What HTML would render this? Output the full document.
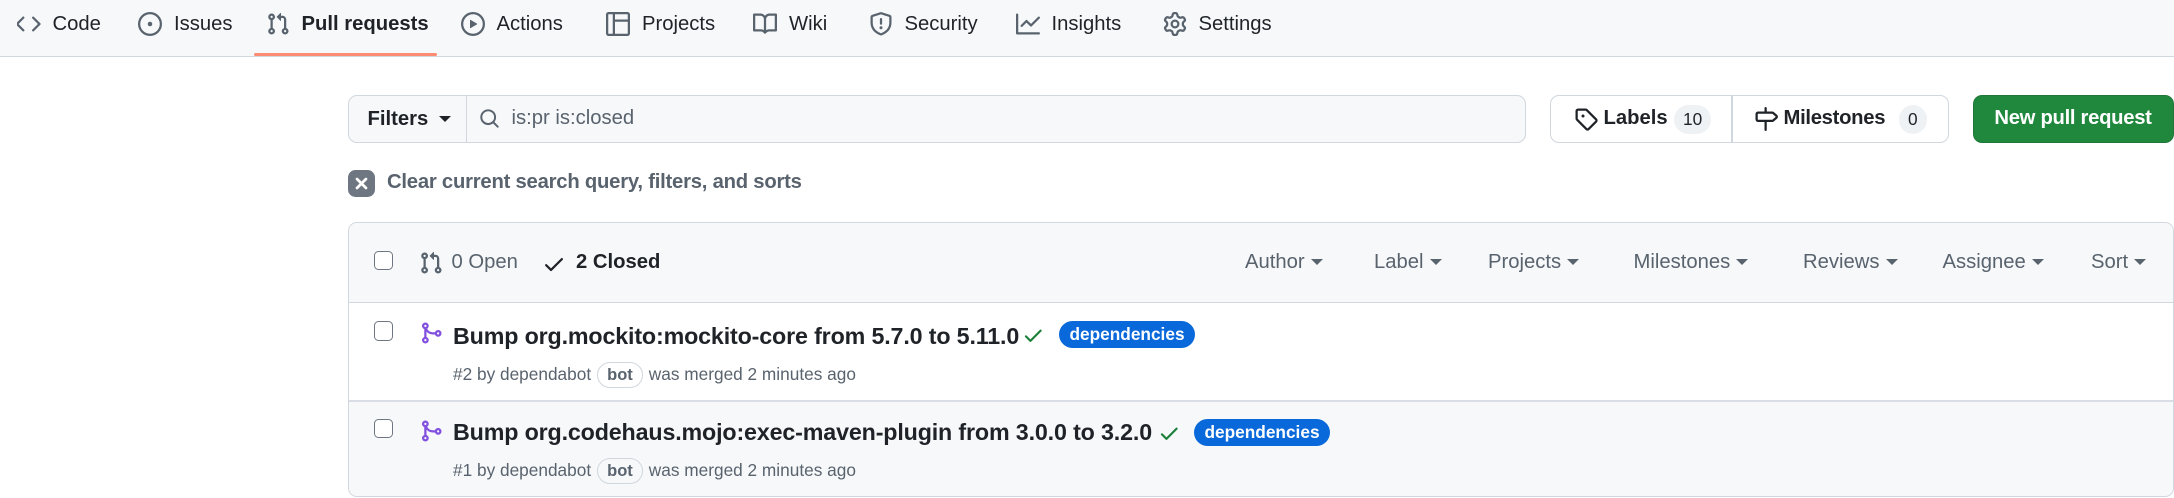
<!DOCTYPE html>
<html><head><meta charset="utf-8">
<style>
*{box-sizing:border-box;margin:0;padding:0}
html,body{width:2174px;height:498px;overflow:hidden;background:#fff}
#w{zoom:1.5;position:relative;width:1449.4px;height:332px;font-family:"Liberation Sans",sans-serif;color:#1f2328}
.a{position:absolute;white-space:nowrap}
.nav{position:absolute;left:0;top:0;width:1449.4px;height:38px;background:#f6f8fa;border-bottom:1px solid #d0d7de}
.ni{position:absolute;top:8px;font-size:13.5px;color:#1f2328;display:flex;align-items:center;gap:8px;height:16px}
.ni svg{width:16px;height:16px;fill:#59636e;flex:none}
.ul{position:absolute;left:169px;top:35px;width:122px;height:2px;background:#fd8c73;border-radius:2px}
svg{fill:currentColor}
.caret{display:inline-block;width:0;height:0;border-left:4px solid transparent;border-right:4px solid transparent;border-top:4px solid currentColor;vertical-align:middle;margin-left:4px}
.cb{position:absolute;width:13px;height:13px;border:1px solid #6e7781;border-radius:3px;background:#fff}
.lbl{position:absolute;height:18px;background:#0969da;color:#fff;font-size:11.5px;font-weight:bold;border-radius:9px;padding:0 7px;line-height:18px}
.bot{display:inline-block;border:1px solid #d0d7de;border-radius:9px;padding:0 6px;font-weight:bold;font-size:11px;line-height:16px;color:#59636e;margin:0 4px}
.sf{position:absolute;top:167px;font-size:13.5px;color:#59636e}
.t{position:absolute;font-size:15.5px;font-weight:bold;letter-spacing:-.1px;white-space:nowrap}
.m{position:absolute;font-size:11.5px;color:#59636e;letter-spacing:0;white-space:nowrap}
</style></head><body><div id="w">
<div class="nav">
 <div class="ni" style="left:11px"><svg viewBox="0 0 16 16"><path d="m11.28 3.22 4.25 4.25a.75.75 0 0 1 0 1.06l-4.25 4.25a.75.75 0 0 1-1.06-1.06L13.94 8l-3.72-3.72a.75.75 0 0 1 1.06-1.06Zm-6.56 0a.75.75 0 0 1 0 1.06L1.06 8l3.72 3.72a.75.75 0 0 1-1.06 1.06L-.53 8.53a.75.75 0 0 1 0-1.06l4.25-4.25a.75.75 0 0 1 1.060 0Z"/></svg>Code</div>
 <div class="ni" style="left:92px"><svg viewBox="0 0 16 16"><path d="M8 9.5a1.5 1.5 0 1 0 0-3 1.5 1.5 0 0 0 0 3Z"/><path d="M8 0a8 8 0 1 1 0 16A8 8 0 0 1 8 0ZM1.5 8a6.5 6.5 0 1 0 13 0 6.5 6.5 0 0 0-13 0Z"/></svg>Issues</div>
 <div class="ni" style="left:177px;font-weight:bold"><svg viewBox="0 0 16 16"><path d="M1.5 3.25a2.25 2.25 0 1 1 3 2.122v5.256a2.251 2.251 0 1 1-1.5 0V5.372A2.25 2.25 0 0 1 1.5 3.25Zm5.677-.177L9.573.677A.25.25 0 0 1 10 .854V2.5h1A2.5 2.5 0 0 1 13.5 5v5.628a2.251 2.251 0 1 1-1.5 0V5a1 1 0 0 0-1-1h-1v1.646a.25.25 0 0 1-.427.177L7.177 3.427a.25.25 0 0 1 0-.354ZM3.750 2.5a.75.75 0 1 0 0 1.5.75.75 0 0 0 0-1.5Zm0 9.5a.75.75 0 1 0 0 1.5.75.75 0 0 0 0-1.5Zm8.25.75a.75.75 0 1 0 1.5 0 .75.75 0 0 0-1.5 0Z"/></svg>Pull requests</div>
 <div class="ni" style="left:307px"><svg viewBox="0 0 16 16"><path d="M8 0a8 8 0 1 1 0 16A8 8 0 0 1 8 0ZM1.5 8a6.5 6.5 0 1 0 13 0 6.5 6.5 0 0 0-13 0Zm4.879-2.773 4.264 2.559a.25.25 0 0 1 0 .428l-4.264 2.559A.25.25 0 0 1 6 10.559V5.442a.25.25 0 0 1 .379-.215Z"/></svg>Actions</div>
 <div class="ni" style="left:404px"><svg viewBox="0 0 16 16"><path d="M1.75 0h12.5C15.216 0 16 .784 16 1.75v12.5A1.75 1.75 0 0 1 14.25 16H1.75A1.75 1.75 0 0 1 0 14.25V1.75C0 .784.784 0 1.75 0ZM1.5 1.75v12.5c0 .138.112.25.25.25H4.5V1.5H1.75a.25.25 0 0 0-.25.25ZM6 14.5h8.25a.25.25 0 0 0 .25-.25V6.5H6ZM14.5 5V1.75a.25.25 0 0 0-.25-.25H6V5Z"/></svg>Projects</div>
 <div class="ni" style="left:502px"><svg viewBox="0 0 16 16"><path d="M0 1.75A.75.75 0 0 1 .75 1h4.253c1.227 0 2.317.59 3 1.501A3.743 3.743 0 0 1 11.006 1h4.245a.75.75 0 0 1 .75.75v10.5a.75.75 0 0 1-.75.75h-4.507a2.25 2.25 0 0 0-1.591.659l-.622.621a.75.75 0 0 1-1.060 0l-.622-.621A2.25 2.25 0 0 0 5.258 13H.75a.75.75 0 0 1-.75-.75Zm7.251 10.324.004-5.073-.002-2.253A2.25 2.25 0 0 0 5.003 2.5H1.5v9h3.757a3.75 3.75 0 0 1 1.994.574ZM8.755 4.75l-.004 7.322a3.752 3.752 0 0 1 1.992-.572H14.5v-9h-3.495a2.25 2.25 0 0 0-2.25 2.25Z"/></svg>Wiki</div>
 <div class="ni" style="left:579px"><svg viewBox="0 0 16 16"><path d="M7.467.133a1.748 1.748 0 0 1 1.066 0l5.25 1.68A1.75 1.75 0 0 1 15 3.48V7c0 1.566-.32 3.182-1.303 4.682-.983 1.498-2.585 2.813-5.032 3.855a1.697 1.697 0 0 1-1.330 0c-2.447-1.042-4.049-2.357-5.032-3.855C1.32 10.182 1 8.566 1 7V3.48a1.755 1.755 0 0 1 1.217-1.667Zm.61 1.429a.25.25 0 0 0-.153 0l-5.25 1.68a.25.25 0 0 0-.174.238V7c0 1.358.275 2.666 1.057 3.86.784 1.194 2.121 2.34 4.366 3.297a.196.196 0 0 0 .154 0c2.245-.956 3.582-2.104 4.366-3.298C13.225 9.666 13.5 8.36 13.5 7V3.48a.251.251 0 0 0-.174-.237l-5.25-1.68ZM8.75 4.75v3a.75.75 0 0 1-1.5 0v-3a.75.75 0 0 1 1.5 0ZM9 10.5a1 1 0 1 1-2 0 1 1 0 0 1 2 0Z"/></svg>Security</div>
 <div class="ni" style="left:677px"><svg viewBox="0 0 16 16"><path d="M1.5 1.75V13.5h13.75a.75.75 0 0 1 0 1.5H.75a.75.75 0 0 1-.75-.75V1.75a.75.75 0 0 1 1.5 0Zm14.28 2.53-5.25 5.25a.75.75 0 0 1-1.060 0L7 7.06 4.28 9.78a.751.751 0 0 1-1.042-.018.751.751 0 0 1-.018-1.042l3.25-3.25a.75.75 0 0 1 1.060 0L10 7.94l4.72-4.720a.751.751 0 0 1 1.042.018.751.751 0 0 1 .018 1.042Z"/></svg>Insights</div>
 <div class="ni" style="left:775px"><svg viewBox="0 0 16 16"><path d="M8 0a8.2 8.2 0 0 1 .701.031C9.444.095 9.99.645 10.16 1.29l.288 1.107c.018.066.079.158.212.224.231.114.454.243.668.386.123.082.233.09.299.071l1.103-.303c.644-.176 1.392.021 1.82.63.27.385.506.792.704 1.218.315.675.111 1.422-.364 1.891l-.814.806c-.049.048-.098.147-.088.294.016.257.016.515 0 .772-.01.147.038.246.088.294l.814.806c.475.469.679 1.216.364 1.891a7.977 7.977 0 0 1-.704 1.217c-.428.61-1.176.807-1.82.63l-1.102-.302c-.067-.019-.177-.011-.3.071a5.909 5.909 0 0 1-.668.386c-.133.066-.194.158-.211.224l-.29 1.106c-.168.646-.715 1.196-1.458 1.26a8.006 8.006 0 0 1-1.402 0c-.743-.064-1.289-.614-1.458-1.26l-.289-1.106c-.018-.066-.079-.158-.212-.224a5.738 5.738 0 0 1-.668-.386c-.123-.082-.233-.09-.299-.071l-1.103.303c-.644.176-1.392-.021-1.82-.63a8.12 8.12 0 0 1-.704-1.218c-.315-.675-.111-1.422.363-1.891l.815-.806c.05-.048.098-.147.088-.294a6.214 6.214 0 0 1 0-.772c.01-.147-.038-.246-.088-.294l-.815-.806C.635 6.045.431 5.298.746 4.623a7.92 7.92 0 0 1 .704-1.217c.428-.61 1.176-.807 1.82-.63l1.102.302c.067.019.177.011.3-.071.214-.143.437-.272.668-.386.133-.066.194-.158.211-.224l.29-1.106C6.009.645 6.556.095 7.299.03 7.53.01 7.764 0 8 0Zm-.571 1.525c-.036.003-.108.036-.137.146l-.289 1.105c-.147.561-.549.967-.998 1.189-.173.086-.34.183-.5.29-.417.278-.97.423-1.529.27l-1.103-.303c-.109-.03-.175.016-.195.045-.22.312-.412.644-.573.99-.014.031-.021.11.059.19l.815.806c.411.406.562.957.53 1.456a4.709 4.709 0 0 0 0 .582c.032.499-.119 1.05-.53 1.456l-.815.806c-.081.08-.073.159-.059.19.162.346.353.677.573.989.02.03.085.076.195.046l1.102-.303c.56-.153 1.113-.008 1.53.27.161.107.328.204.501.29.447.222.85.629.997 1.189l.289 1.105c.029.109.101.143.137.146a6.6 6.6 0 0 0 1.142 0c.036-.003.108-.036.137-.146l.289-1.105c.147-.561.549-.967.998-1.189.173-.086.34-.183.5-.29.417-.278.97-.423 1.529-.27l1.103.303c.109.029.175-.016.195-.045.22-.313.411-.644.573-.99.014-.031.021-.11-.059-.19l-.815-.806c-.411-.406-.562-.957-.53-1.456a4.709 4.709 0 0 0 0-.582c-.032-.499.119-1.05.53-1.456l.815-.806c.081-.08.073-.159.059-.19a6.464 6.464 0 0 0-.573-.989c-.02-.03-.085-.076-.195-.046l-1.102.303c-.56.153-1.113.008-1.53-.27a4.44 4.440 0 0 0-.501-.29c-.447-.222-.85-.629-.997-1.189l-.289-1.105c-.029-.11-.101-.143-.137-.146a6.6 6.6 0 0 0-1.142 0ZM11 8a3 3 0 1 1-6 0 3 3 0 0 1 6 0ZM9.5 8a1.5 1.5 0 1 0-3.001.001A1.5 1.5 0 0 0 9.5 8Z"/></svg>Settings</div>
 <div class="ul"></div>
</div>

<div class="a" style="left:232px;top:63px;width:785px;height:32px;border:1px solid #d0d7de;border-radius:6px;background:#f6f8fa"></div>
<div class="a" style="left:232px;top:63px;width:79px;height:32px;border-right:1px solid #d0d7de;font-size:13.5px;font-weight:bold;line-height:32px;padding-left:13px">Filters<span class="caret" style="margin-left:7px"></span></div>
<svg class="a" style="left:319px;top:72px;width:14px;height:14px;color:#59636e" viewBox="0 0 16 16"><path d="M10.68 11.74a6 6 0 0 1-7.922-8.982 6 6 0 0 1 8.982 7.922l3.040 3.040a.749.749 0 0 1-.326 1.275.749.749 0 0 1-.734-.215ZM11.5 7a4.499 4.499 0 1 0-8.997 0A4.499 4.499 0 0 0 11.5 7Z"/></svg>
<div class="a" style="left:341px;top:71px;font-size:13.5px;color:#59636e">is:pr is:closed</div>

<div class="a" style="left:1033px;top:63px;width:266px;height:32px;border:1px solid #d0d7de;border-radius:6px;background:#fff"></div>
<div class="a" style="left:1154px;top:63px;width:1px;height:32px;background:#d0d7de"></div>
<svg class="a" style="left:1049px;top:71px;width:16px;height:16px;color:#1f2328" viewBox="0 0 16 16"><path d="M1 7.775V2.75C1 1.784 1.784 1 2.75 1h5.025c.464 0 .91.184 1.238.513l6.25 6.25a1.75 1.75 0 0 1 0 2.474l-5.026 5.026a1.75 1.75 0 0 1-2.474 0l-6.25-6.25A1.752 1.752 0 0 1 1 7.775Zm1.5 0c0 .066.026.13.073.177l6.25 6.25a.25.25 0 0 0 .354 0l5.025-5.025a.25.25 0 0 0 0-.354l-6.25-6.25a.25.25 0 0 0-.177-.073H2.75a.25.25 0 0 0-.25.25ZM6 5a1 1 0 1 1 0 2 1 1 0 0 1 0-2Z"/></svg>
<div class="a" style="left:1069px;top:71px;font-size:13.5px;font-weight:bold">Labels</div>
<div class="a" style="left:1116px;top:70px;height:19px;padding:0 6px;border-radius:10px;background:#eff2f5;font-size:11.5px;line-height:19px">10</div>
<svg class="a" style="left:1169px;top:71px;width:16px;height:16px" viewBox="0 0 16 16"><path d="M7.75 0a.75.75 0 0 1 .75.75V3h3.634c.414 0 .814.147 1.13.414l2.07 1.75a1.75 1.75 0 0 1 0 2.672l-2.07 1.75a1.75 1.75 0 0 1-1.13.414H8.5v5.25a.75.75 0 0 1-1.5 0V10H2.75A1.75 1.75 0 0 1 1 8.25v-3.5C1 3.784 1.784 3 2.75 3H7V.75A.75.75 0 0 1 7.75 0Zm4.384 8.5a.25.25 0 0 0 .161-.06l2.07-1.75a.248.248 0 0 0 0-.38l-2.07-1.75a.25.25 0 0 0-.161-.06H2.75a.25.25 0 0 0-.25.25v3.5c0 .138.112.25.25.25h9.384Z"/></svg>
<div class="a" style="left:1189px;top:71px;font-size:13.5px;font-weight:bold;letter-spacing:-.2px">Milestones</div>
<div class="a" style="left:1266px;top:70px;height:19px;padding:0 6px;border-radius:10px;background:#eff2f5;font-size:11.5px;line-height:19px">0</div>

<div class="a" style="left:1315px;top:63px;width:134px;height:32px;border-radius:6px;background:#1f883d;border:1px solid rgba(31,35,40,.15);color:#fff;font-size:13.5px;font-weight:bold;line-height:30px;text-align:center;letter-spacing:-.2px">New pull request</div>

<div class="a" style="left:232px;top:113px;width:18px;height:18px;border-radius:5px;background:#6e7781"></div>
<svg class="a" style="left:236px;top:117px;width:10px;height:10px" viewBox="0 0 10 10"><path d="M2 2L8 8M8 2L2 8" stroke="#fff" stroke-width="1.8" stroke-linecap="round"/></svg>
<div class="a" style="left:258px;top:114px;font-size:13.5px;font-weight:bold;color:#59636e;letter-spacing:-.15px">Clear current search query, filters, and sorts</div>

<div class="a" style="left:232px;top:148px;width:1217px;height:183px;border:1px solid #d0d7de;border-radius:6px;overflow:hidden">
 <div style="position:absolute;left:0;top:0;right:0;height:53px;background:#f6f8fa;border-bottom:1px solid #d0d7de"></div>
 <div style="position:absolute;left:0;top:118px;right:0;height:1px;background:#d8dee4"></div>
 <div style="position:absolute;left:0;top:119px;right:0;bottom:0;background:#f6f8fa"></div>
</div>
<div class="cb" style="left:249px;top:167px"></div>
<svg class="a" style="left:279px;top:167px;width:16px;height:16px;color:#59636e" viewBox="0 0 16 16"><path d="M1.5 3.25a2.25 2.25 0 1 1 3 2.122v5.256a2.251 2.251 0 1 1-1.5 0V5.372A2.25 2.25 0 0 1 1.5 3.25Zm5.677-.177L9.573.677A.25.25 0 0 1 10 .854V2.5h1A2.5 2.5 0 0 1 13.5 5v5.628a2.251 2.251 0 1 1-1.5 0V5a1 1 0 0 0-1-1h-1v1.646a.25.25 0 0 1-.427.177L7.177 3.427a.25.25 0 0 1 0-.354ZM3.75 2.5a.75.75 0 1 0 0 1.5.75.75 0 0 0 0-1.5Zm0 9.5a.75.75 0 1 0 0 1.5.75.75 0 0 0 0-1.5Zm8.25.75a.75.75 0 1 0 1.5 0 .75.75 0 0 0-1.5 0Z"/></svg>
<div class="a" style="left:301px;top:167px;font-size:13.5px;color:#59636e">0 Open</div>
<svg class="a" style="left:361px;top:168px;width:16px;height:16px" viewBox="0 0 16 16"><path d="M13.78 4.22a.75.75 0 0 1 0 1.06l-7.25 7.25a.75.75 0 0 1-1.06 0L2.22 9.28a.751.751 0 0 1 .018-1.042.751.751 0 0 1 1.042-.018L6 10.94l6.72-6.72a.75.75 0 0 1 1.06 0Z"/></svg>
<div class="a" style="left:384px;top:167px;font-size:13.5px;font-weight:bold">2 Closed</div>
<div class="sf" style="left:830px">Author<span class="caret"></span></div>
<div class="sf" style="left:916px">Label<span class="caret"></span></div>
<div class="sf" style="left:992px">Projects<span class="caret"></span></div>
<div class="sf" style="left:1089px">Milestones<span class="caret"></span></div>
<div class="sf" style="left:1202px">Reviews<span class="caret"></span></div>
<div class="sf" style="left:1295px">Assignee<span class="caret"></span></div>
<div class="sf" style="left:1394px">Sort<span class="caret"></span></div>

<div class="cb" style="left:249px;top:214px"></div>
<svg class="a" style="left:279px;top:214px;width:16px;height:16px;color:#8250df" viewBox="0 0 16 16"><path d="M5.45 5.154A4.25 4.25 0 0 0 9.25 7.5h1.378a2.251 2.251 0 1 1 0 1.5H9.25A5.734 5.734 0 0 1 5 7.123v3.505a2.25 2.25 0 1 1-1.5 0V5.372a2.25 2.25 0 1 1 1.95-.218ZM4.25 13.5a.75.75 0 1 0 0-1.5.75.75 0 0 0 0 1.5Zm8.5-4.5a.75.75 0 1 0 0-1.5.75.75 0 0 0 0 1.5ZM5 3.25a.75.75 0 1 0 0 .005V3.25Z"/></svg>
<div class="t" style="left:302px;top:215px">Bump org.mockito:mockito-core from 5.7.0 to 5.11.0</div>
<svg class="a" style="left:681px;top:216px;width:15px;height:15px;color:#1a7f37" viewBox="0 0 16 16"><path d="M13.78 4.22a.75.75 0 0 1 0 1.06l-7.25 7.25a.75.75 0 0 1-1.06 0L2.22 9.28a.751.751 0 0 1 .018-1.042.751.751 0 0 1 1.042-.018L6 10.94l6.72-6.72a.75.75 0 0 1 1.06 0Z"/></svg>
<div class="lbl" style="left:706px;top:214px">dependencies</div>
<div class="m" style="left:302px;top:241px">#2 by dependabot<span class="bot">bot</span>was merged 2 minutes ago</div>

<div class="cb" style="left:249px;top:279px"></div>
<svg class="a" style="left:279px;top:279px;width:16px;height:16px;color:#8250df" viewBox="0 0 16 16"><path d="M5.45 5.154A4.25 4.25 0 0 0 9.25 7.5h1.378a2.251 2.251 0 1 1 0 1.5H9.25A5.734 5.734 0 0 1 5 7.123v3.505a2.25 2.25 0 1 1-1.5 0V5.372a2.25 2.25 0 1 1 1.95-.218ZM4.25 13.5a.75.75 0 1 0 0-1.5.75.75 0 0 0 0 1.5Zm8.5-4.5a.75.75 0 1 0 0-1.5.75.75 0 0 0 0 1.5ZM5 3.25a.75.75 0 1 0 0 .005V3.25Z"/></svg>
<div class="t" style="left:302px;top:279px">Bump org.codehaus.mojo:exec-maven-plugin from 3.0.0 to 3.2.0</div>
<svg class="a" style="left:772px;top:281px;width:15px;height:15px;color:#1a7f37" viewBox="0 0 16 16"><path d="M13.78 4.22a.75.75 0 0 1 0 1.06l-7.25 7.25a.75.75 0 0 1-1.06 0L2.22 9.28a.751.751 0 0 1 .018-1.042.751.751 0 0 1 1.042-.018L6 10.94l6.72-6.72a.75.75 0 0 1 1.06 0Z"/></svg>
<div class="lbl" style="left:796px;top:279px">dependencies</div>
<div class="m" style="left:302px;top:305px">#1 by dependabot<span class="bot">bot</span>was merged 2 minutes ago</div>
</div></body></html>
